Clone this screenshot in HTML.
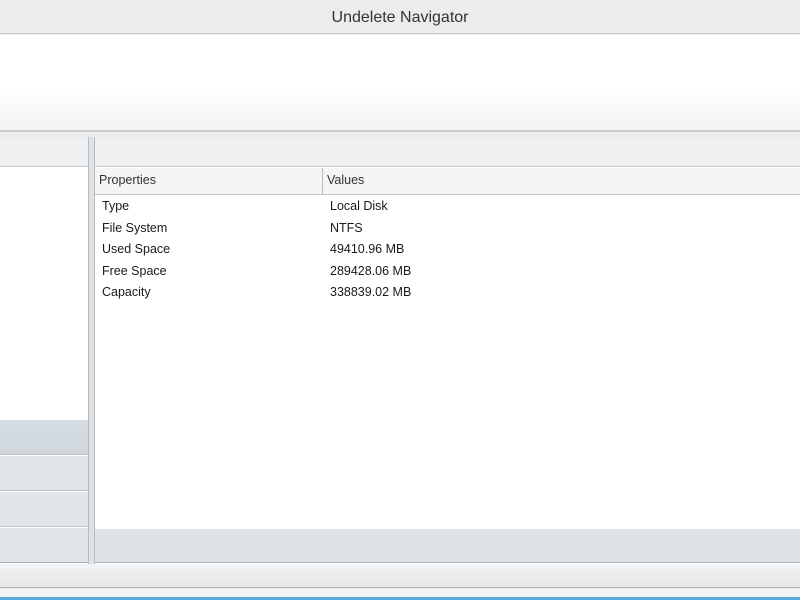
<!DOCTYPE html>
<html><head><style>
*{margin:0;padding:0;box-sizing:border-box}
body{width:800px;height:600px;overflow:hidden;background:#eceeef;font-family:"Liberation Sans",sans-serif;position:relative}
div{position:absolute}
.t{font-size:12.5px;color:#1a1a1a}
</style></head><body>
<div style="left:0;top:0;width:800px;height:34px;background:#ececec;border-bottom:1px solid #c8c8c8"></div>
<div style="left:0;top:9px;width:800px;text-align:center;font-size:16px;color:#333">Undelete Navigator</div>
<div style="left:0;top:35px;width:800px;height:97px;background:linear-gradient(#fff 0%,#fff 60%,#f0f1f3 100%);border-bottom:2px solid #c9cbcd"></div>
<div style="left:0;top:134px;width:800px;height:3px;background:#e8eaeb"></div>
<div style="left:0;top:137px;width:89px;height:427px;background:#fff;border-right:1px solid #b9bcbf"></div>
<div style="left:0;top:137px;width:88px;height:30px;background:#eef0f1;border-bottom:1px solid #c5c7c9"></div>
<div style="left:0;top:420px;width:88px;height:35px;background:linear-gradient(#d6dde2,#cfd6dc);border-bottom:1px solid #b9bec2"></div>
<div style="left:0;top:456px;width:88px;height:35px;background:#e0e5e8;border-bottom:1px solid #bcc0c3"></div>
<div style="left:0;top:492px;width:88px;height:35px;background:#e0e5e8;border-bottom:1px solid #bcc0c3"></div>
<div style="left:0;top:528px;width:88px;height:35px;background:#e0e5e8;border-bottom:1px solid #a9adb0"></div>
<div style="left:89px;top:137px;width:5px;height:427px;background:#dfe2e4"></div>
<div style="left:94px;top:137px;width:706px;height:427px;background:#fff;border-left:1px solid #b9bcbf"></div>
<div style="left:95px;top:137px;width:705px;height:30px;background:#eef0f1;border-bottom:1px solid #c5c7c9"></div>
<div style="left:95px;top:168px;width:705px;height:27px;background:#f4f5f6;border-bottom:1px solid #c3c5c7"></div>
<div style="left:322px;top:168px;width:1px;height:27px;background:#b9bbbd"></div>
<div class="t" style="left:99px;top:173px;color:#333">Properties</div>
<div class="t" style="left:327px;top:173px;color:#333">Values</div>
<div class="t" style="left:102px;top:196px;line-height:21.6px">Type<br>File System<br>Used Space<br>Free Space<br>Capacity</div>
<div class="t" style="left:330px;top:196px;line-height:21.6px">Local Disk<br>NTFS<br>49410.96 MB<br>289428.06 MB<br>338839.02 MB</div>
<div style="left:95px;top:529px;width:705px;height:34px;background:#dfe3e6;border-bottom:1px solid #a9adb0"></div>
<div style="left:0;top:564px;width:800px;height:4px;background:#f2f3f4"></div>
<div style="left:0;top:568px;width:800px;height:20px;background:linear-gradient(#eff0f1,#e6e8e9);border-bottom:1px solid #b0b3b6"></div>
<div style="left:0;top:589px;width:800px;height:8px;background:#f2f4f5"></div>
<div style="left:0;top:597px;width:800px;height:3px;background:#5aa9d8"></div>
</body></html>
